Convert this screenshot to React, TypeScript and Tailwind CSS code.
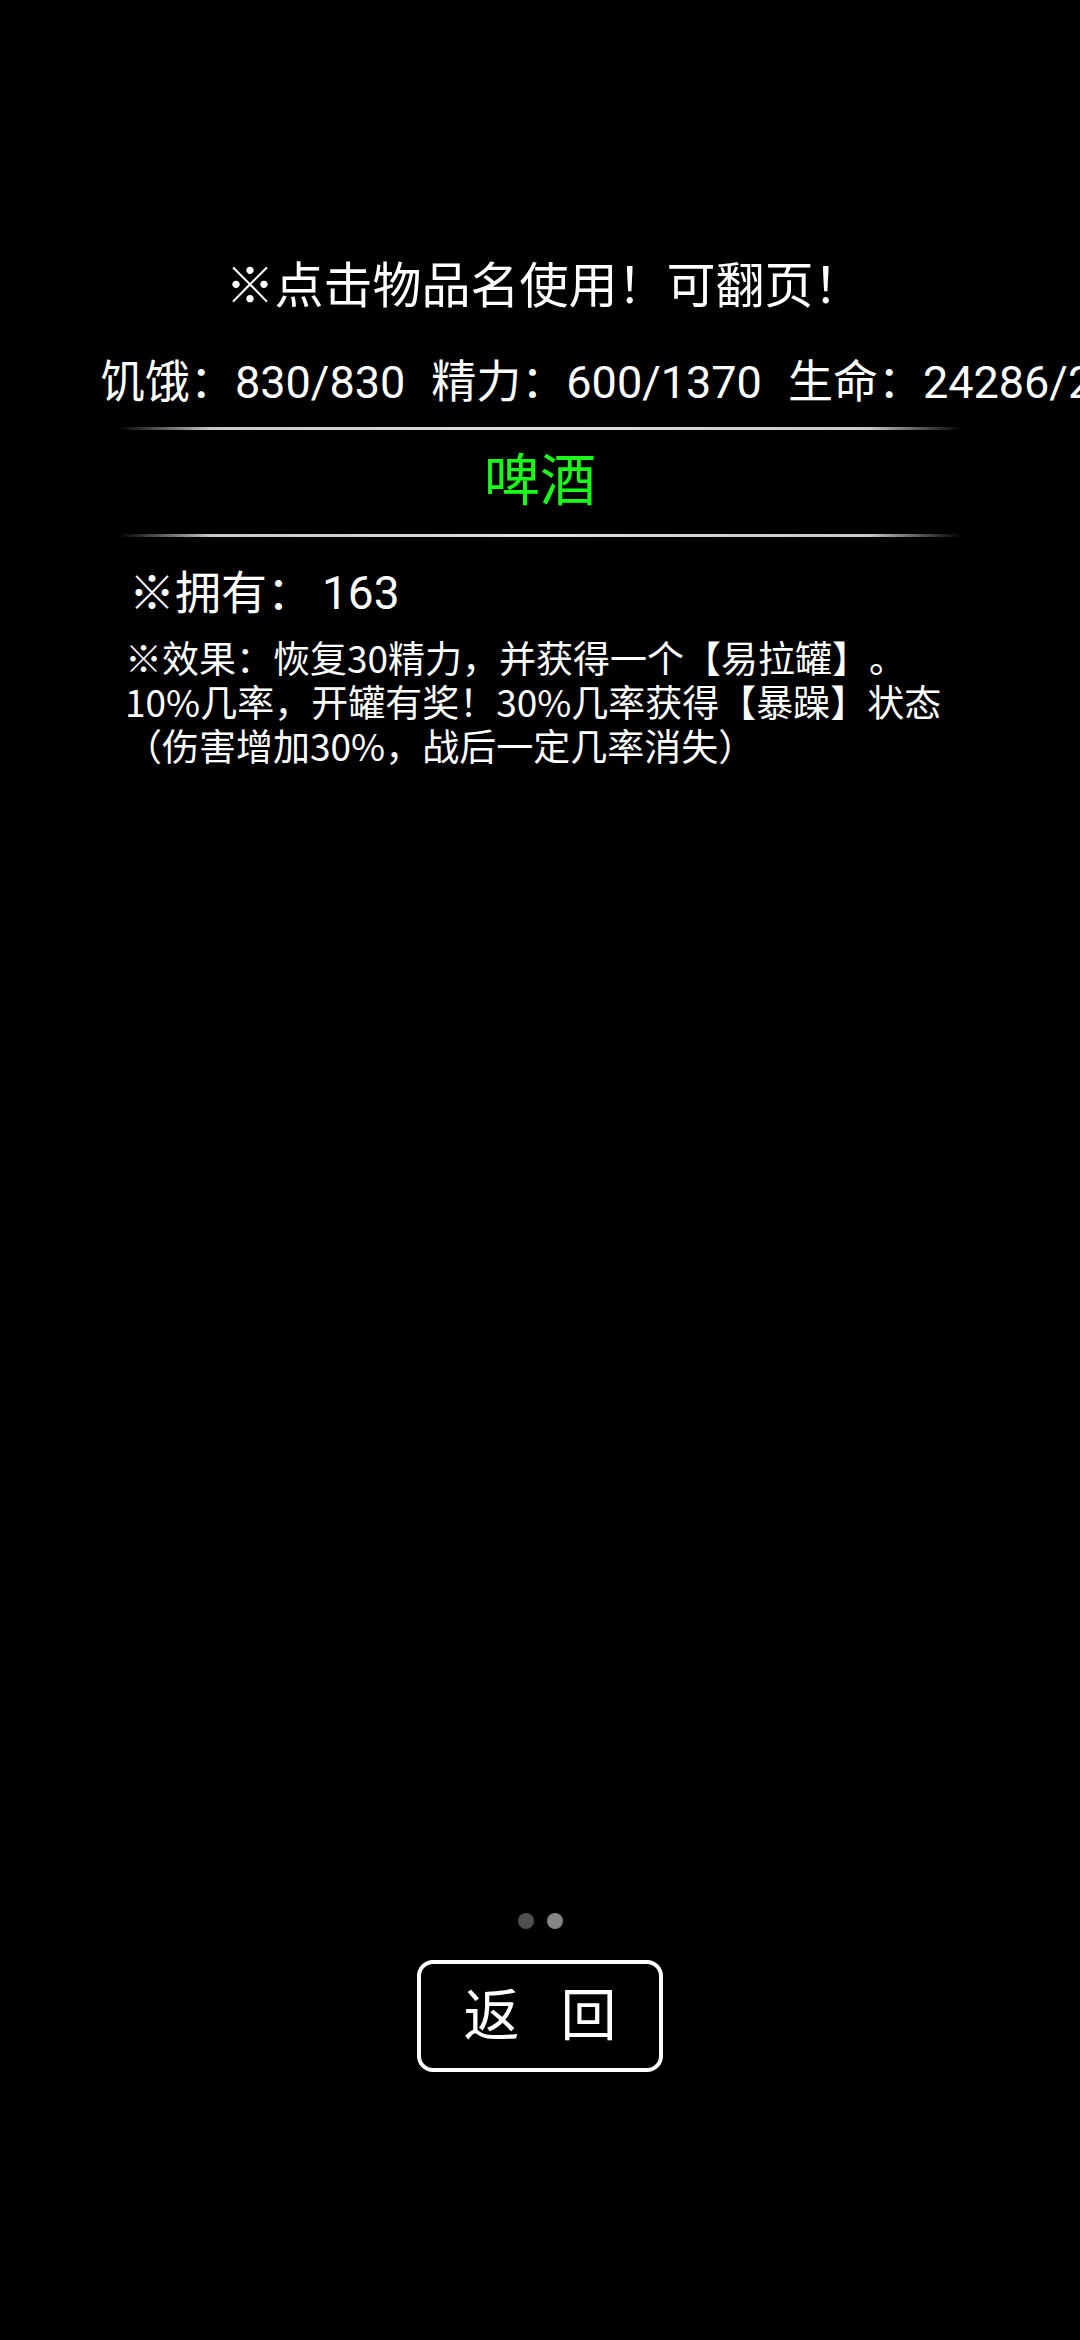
const font = { fontFamily: 'Roboto, "Noto Sans CJK SC", "Noto Sans", sans-serif' };
const cjk = { fontFamily: '"Noto Sans CJK SC", "Noto Sans", sans-serif' };

function Divider() {
  return (
    <div className="mx-[119px] h-[3px] bg-[linear-gradient(to_right,transparent,#c8c8c8_11%,#e0e0e0_50%,#c8c8c8_89%,transparent)]" />
  );
}

export default function App() {
  return (
    <div
      className="w-[1080px] h-[2340px] bg-black text-white overflow-hidden flex flex-col [text-spacing-trim:space-all]"
      style={font}
    >
      <div className="h-[262px]" />
      <div className="h-[50px] text-[49px] leading-[50px] text-center pl-[8px]">※点击物品名使用！可翻页！</div>
      <div className="h-[49px]" />
      <div className="h-[44px] text-[45px] leading-[44px] whitespace-nowrap pl-[100px] flex gap-[26px]">
        <span>饥饿：830/830</span>
        <span>精力：600/1370</span>
        <span>生命：24286/24286</span>
      </div>
      <div className="h-[22px]" />
      <Divider />
      <div className="h-[104px] flex items-center justify-center pb-[2px] text-[56px] leading-[56px] text-[#19ff19]">
        啤酒
      </div>
      <Divider />
      <div className="h-[31px]" />
      <div className="h-[50px] text-[46px] leading-[50px] pl-[129px]">
        ※拥有：<span className="ml-[9px]">163</span>
      </div>
      <div className="h-[17px]" />
      <div className="pl-[125px] text-[37px] leading-[44px] whitespace-nowrap" style={cjk}>
        <div>※效果：恢复30精力，并获得一个【易拉罐】。</div>
        <div>10%几率，开罐有奖！30%几率获得【暴躁】状态</div>
        <div>（伤害增加30%，战后一定几率消失）</div>
      </div>
      <div className="flex-1" />
      <div className="flex justify-center gap-[13px] pl-[1px]">
        <div className="w-[16px] h-[16px] rounded-full bg-[#4f4f4f]" />
        <div className="w-[16px] h-[16px] rounded-full bg-[#858585]" />
      </div>
      <div className="h-[31px]" />
      <div className="flex justify-center">
        <button className="w-[246px] h-[112px] border-[4px] border-white rounded-[16px] flex items-center justify-center gap-[41px] text-[56px] leading-none text-white" style={font}>
          <span>返</span>
          <span>回</span>
        </button>
      </div>
      <div className="h-[268px]" />
    </div>
  );
}
